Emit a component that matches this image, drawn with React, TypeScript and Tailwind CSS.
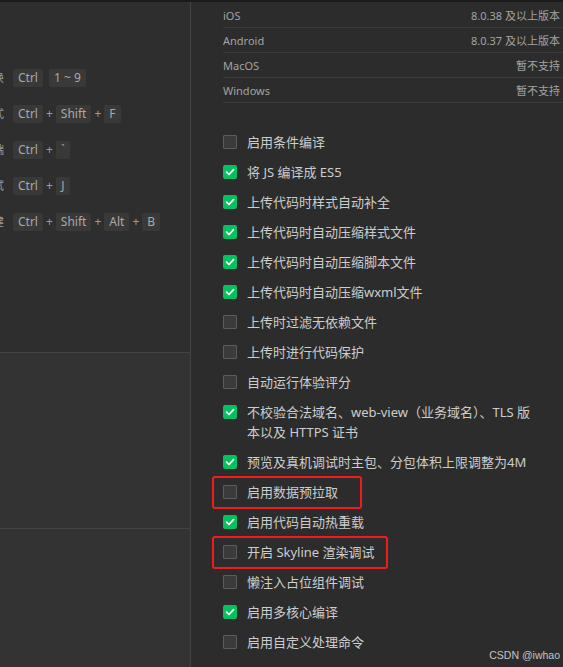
import React from "react";

const font = { fontFamily: '"Noto Sans", "Noto Sans CJK SC", sans-serif' };

function Key({ k }: { k: string }) {
  return (
    <span className="h-[18px] px-[5px] min-w-[14px] flex items-center justify-center rounded-[2px] bg-[#393939] text-[12px] text-[#a9a9a9] leading-none">
      {k}
    </span>
  );
}

function Shortcut({ label, keys, plus = true }: { label: string; keys: string[]; plus?: boolean }) {
  return (
    <div className="h-[36px] flex items-center">
      <span className="ml-[-56px] w-[44px] text-right text-[11px] text-[#9a9a9a] whitespace-nowrap overflow-hidden">
        {label}
      </span>
      <div className="ml-[9px] flex items-center gap-[3px]">
        {keys.map((k, i) => (
          <React.Fragment key={i}>
            {i > 0 &&
              (plus ? (
                <span className="text-[12px] text-[#9a9a9a] leading-none">+</span>
              ) : (
                <span className="w-[0px]" />
              ))}
            <Key k={k} />
          </React.Fragment>
        ))}
      </div>
    </div>
  );
}

function Box({ checked }: { checked: boolean }) {
  return checked ? (
    <span className="mt-[3px] w-[14px] h-[14px] shrink-0 rounded-[2px] bg-[#07c160] flex items-center justify-center">
      <svg width="10" height="10" viewBox="0 0 10 10">
        <path d="M1.6 5.2 L4 7.5 L8.5 2.6" fill="none" stroke="#fff" strokeWidth="1.7" strokeLinecap="round" strokeLinejoin="round" />
      </svg>
    </span>
  ) : (
    <span className="mt-[3px] w-[14px] h-[14px] shrink-0 rounded-[1px] bg-[#3b3b3b] border border-[#5c5c5c]" />
  );
}

type Item = { t: React.ReactNode; c: boolean; mark?: number };

const items: Item[] = [
  { t: "启用条件编译", c: false },
  { t: "将 JS 编译成 ES5", c: true },
  { t: "上传代码时样式自动补全", c: true },
  { t: "上传代码时自动压缩样式文件", c: true },
  { t: "上传代码时自动压缩脚本文件", c: true },
  { t: "上传代码时自动压缩wxml文件", c: true },
  { t: "上传时过滤无依赖文件", c: false },
  { t: "上传时进行代码保护", c: false },
  { t: "自动运行体验评分", c: false },
  {
    t: (
      <>
        不校验合法域名、web-view（业务域名）、TLS 版
        <br />
        本以及 HTTPS 证书
      </>
    ),
    c: true,
  },
  { t: "预览及真机调试时主包、分包体积上限调整为4M", c: true },
  { t: "启用数据预拉取", c: false, mark: 150 },
  { t: "启用代码自动热重载", c: true },
  { t: "开启 Skyline 渲染调试", c: false, mark: 176 },
  { t: "懒注入占位组件调试", c: false },
  { t: "启用多核心编译", c: true },
  { t: "启用自定义处理命令", c: false },
];

const rows = [
  ["iOS", "8.0.38 及以上版本"],
  ["Android", "8.0.37 及以上版本"],
  ["MacOS", "暂不支持"],
  ["Windows", "暂不支持"],
];

export default function App() {
  return (
    <div className="relative w-[563px] h-[667px] overflow-hidden bg-[#2c2c2c] flex flex-col" style={font}>
      <div className="h-[2px] bg-[#1b1b1b] shrink-0" />
      <div className="flex flex-1 min-h-0">
        {/* left panel */}
        <div className="w-[191px] shrink-0 flex flex-col border-r border-[#434343] overflow-hidden">
          <div className="h-[351px] bg-[#2e2e2e] border-b border-[#444] pt-[58px] pl-[16px] flex flex-col">
            <Shortcut label="切换" keys={["Ctrl", "1 ~ 9"]} plus={false} />
            <Shortcut label="格式" keys={["Ctrl", "Shift", "F"]} />
            <Shortcut label="终端" keys={["Ctrl", "`"]} />
            <Shortcut label="调试" keys={["Ctrl", "J"]} />
            <Shortcut label="构建" keys={["Ctrl", "Shift", "Alt", "B"]} />
          </div>
          <div className="h-[176px] bg-[#333333] border-b border-[#444]" />
          <div className="flex-1 bg-[#333333]" />
        </div>
        {/* right panel */}
        <div className="flex-1 flex flex-col">
          <div className="ml-[32px] pt-[1px]">
            {rows.map(([a, b]) => (
              <div key={a} className="h-[25px] border-b border-[#3b3b3b] flex items-center justify-between pr-[3px] pt-[2px] text-[11px] text-[#a3a3a3]">
                <span>{a}</span>
                <span>{b}</span>
              </div>
            ))}
          </div>
          <div className="mt-[24px] pl-[32px] flex flex-col">
            {items.map((it, i) => (
              <div key={i} className="relative flex items-start gap-[10px] py-[5px]">
                <Box checked={it.c} />
                <span className="text-[13px] leading-[20px] text-[#cdcdcd] whitespace-nowrap">{it.t}</span>
                {it.mark && (
                  <span
                    className="absolute left-[-11px] top-[-1px] h-[33px] border-2 border-[#f01c1c] rounded-[3px]"
                    style={{ width: it.mark }}
                  />
                )}
              </div>
            ))}
          </div>
        </div>
      </div>
      <span className="absolute right-[3px] bottom-[4px] text-[10.5px] text-[#c4c4c4] leading-[16px]" style={{ fontFamily: '"Liberation Sans", sans-serif' }}>
        CSDN @iwhao
      </span>
    </div>
  );
}
